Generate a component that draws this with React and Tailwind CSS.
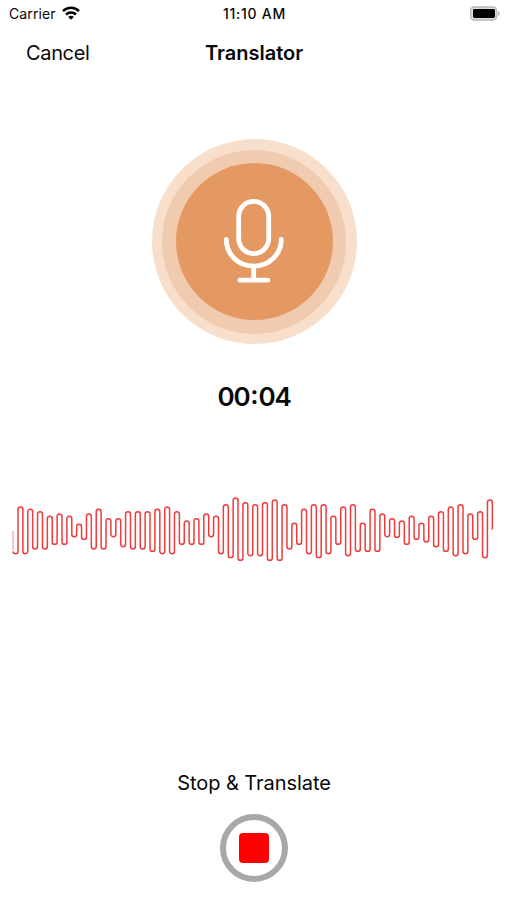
// Peaks and troughs of the recorded signal, in thirds of a pixel.
const PEAKS = [
  66, 73, 80, 94, 87, 94, 118, 87, 73, 101, 101, 80, 80, 80, 73, 66, 80, 108, 101, 87, 94, 59, 39, 53, 59,
  53, 45, 59, 115, 73, 59, 59, 94, 66, 59, 115, 73, 87, 101, 108, 94, 115, 94, 80, 66, 59, 87, 80, 45,
];
const TROUGHS = [
  206, 206, 192, 192, 178, 178, 155, 163, 192, 192, 155, 185, 192, 192, 199, 206, 206, 178, 178, 178, 155,
  206, 218, 226, 212, 212, 226, 226, 192, 178, 206, 218, 206, 178, 212, 199, 199, 199, 155, 157, 178, 163,
  171, 185, 199, 212, 206, 163, 218,
];
const STEP = 4.89;
const R = STEP / 2;

function wavePath() {
  let x = 13.1;
  let d = `M${x} ${TROUGHS[0] / 3 - R}`;
  PEAKS.forEach((peak, i) => {
    d += `V${TROUGHS[i] / 3 - R}`;
    x += STEP;
    d += `A${R} ${R} 0 0 0 ${x} ${TROUGHS[i] / 3 - R}`;
    d += `V${peak / 3 + R}`;
    x += STEP;
    d += `A${R} ${R} 0 0 1 ${x} ${peak / 3 + R}`;
  });
  return d + "V44.5";
}

function Wifi() {
  return (
    <svg className="-mt-[2px] ml-[6px] h-[14px] w-[18px]" viewBox="0 0 18 14" fill="none" stroke="#000" strokeWidth="2.5">
      <path d="M1 5.1a11.4 11.4 0 0 1 16 0" />
      <path d="M4 8.5a7.1 7.1 0 0 1 10 0" />
      <path d="M6.2 11a3.9 3.9 0 0 1 5.6 0L9 13.8z" fill="#000" stroke="none" />
    </svg>
  );
}

function Battery() {
  return (
    <svg className="-mt-px h-[15px] w-[32px]" viewBox="0 0 32 15">
      <rect x="1.6" y="1" width="26" height="13" rx="3.6" fill="#dedede" stroke="#b8b8b8" strokeWidth="1.3" />
      <rect x="4" y="3.1" width="22" height="8.8" rx="1.4" fill="#000" />
      <path d="M29 5.2c2.4.7 2.4 4 0 4.7z" fill="#b4b4b4" />
    </svg>
  );
}

function Microphone() {
  return (
    <svg className="h-[88px] w-[64px]" viewBox="0 0 64 88" fill="none" stroke="#fff" strokeWidth="4.8" strokeLinecap="round">
      <rect x="16.7" y="3.4" width="30" height="52.2" rx="15" />
      <path d="M4.3 41.5C4.3 56 16 68.2 31.7 68.2S59.3 56 59.3 41.5" />
      <path d="M31.7 68.2V82M17.8 82.2H45.9" />
    </svg>
  );
}

export default function App() {
  return (
    <main className="flex h-[900px] w-[507px] flex-col overflow-hidden bg-white font-['Inter','Liberation_Sans',sans-serif] text-[#080808]">
      <header>
        <div className="grid h-[27px] grid-cols-3 items-center pr-[6px] pl-[9px] text-[14px] leading-none">
          <div className="flex items-center">
            <span className="tracking-[0.1px]">Carrier</span>
            <Wifi />
          </div>
          <span className="-ml-px justify-self-center font-medium tracking-[0.75px] whitespace-nowrap">11:10 AM</span>
          <div className="justify-self-end">
            <Battery />
          </div>
        </div>
        <nav className="grid h-[51px] grid-cols-3 items-center px-[26px] text-[20px] leading-none">
          <button className="justify-self-start tracking-[-0.35px]">Cancel</button>
          <h1 className="justify-self-center pl-px font-semibold">Translator</h1>
        </nav>
      </header>

      <section className="mt-[61px] flex flex-col items-center pl-px">
        <div className="flex size-[205px] items-center justify-center rounded-full bg-[#f8dfcc]">
          <div className="flex size-[184px] items-center justify-center rounded-full bg-[#f1cbb0]">
            <div className="flex size-[157px] items-center justify-center rounded-full bg-[#e39961]">
              <Microphone />
            </div>
          </div>
        </div>
        <time className="mt-[37px] flex text-[26px] leading-[32px] font-semibold tracking-[-1.2px]">
          <span>00</span>
          <span className="-mt-[2px] mr-[1px] ml-[1px]">:</span>
          <span>04</span>
        </time>
      </section>

      <svg className="mt-[72px] h-[90px] w-[507px] shrink-0" viewBox="0 0 507 90" fill="none">
        <path d={wavePath()} stroke="#f03c3c" strokeWidth="1.5" />
        <path d="M13.1 46V65" stroke="#fac4c4" strokeWidth="2" />
      </svg>

      <footer className="mt-[196px] flex flex-col items-center pl-px">
        <span className="text-[20px] leading-[24px] tracking-[-0.05px]">Stop &amp; Translate</span>
        <button aria-label="Stop" className="mt-[19px] flex size-[68px] items-center justify-center rounded-full border-[6px] border-[#a8a8a8]">
          <span className="size-[30px] rounded-[4px] bg-[#ff0000]" />
        </button>
      </footer>
    </main>
  );
}
